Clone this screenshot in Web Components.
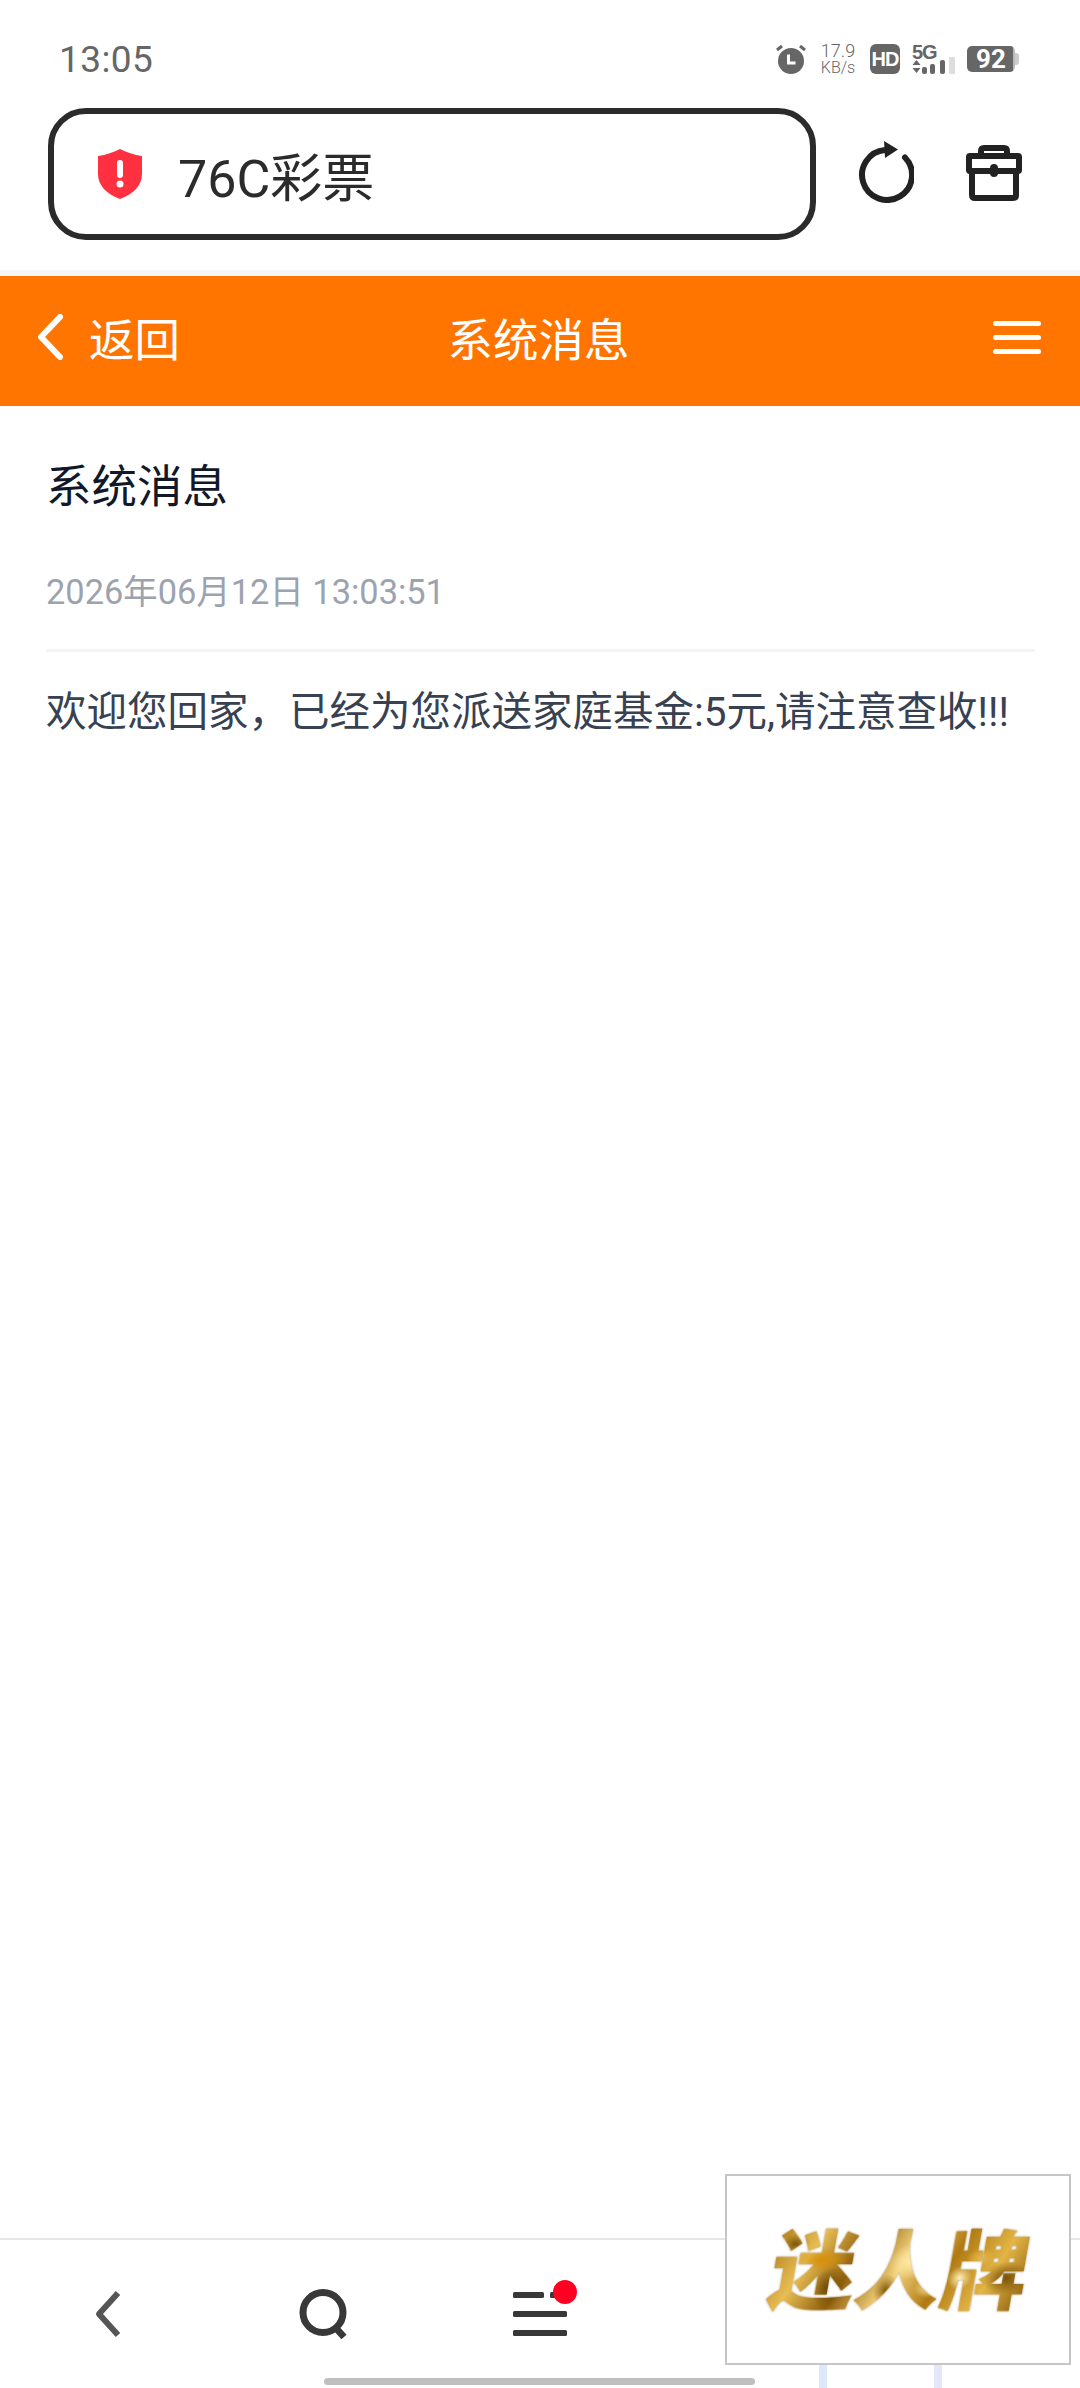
<!DOCTYPE html>
<html lang="zh-CN">
<head>
<meta charset="utf-8">
<title>系统消息</title>
<style>
html, body { margin: 0; padding: 0; background: #fff; }
body {
    width: 1080px;
    height: 2388px;
    overflow: hidden;
    position: relative;
    display: flex;
    flex-direction: column;
    font-family: Roboto, "Noto Sans CJK SC", sans-serif;
}
</style>
</head>
<body>
<status-bar>13:05</status-bar>
<browser-bar>76C彩票</browser-bar>
<app-header back="返回">系统消息</app-header>
<message-detail>
    <span slot="title">系统消息</span>
    <span slot="date">2026年06月12日 13:03:51</span>
    欢迎您回家，已经为您派送家庭基金:5元,请注意查收!!!
</message-detail>
<bottom-nav></bottom-nav>
<float-ad>迷人牌</float-ad>
<script>
class StatusBar extends HTMLElement {
    constructor() {
        super();
        this.attachShadow({mode: 'open'});
        this.shadowRoot.innerHTML = `
<style>
:host { display: flex; align-items: center; justify-content: space-between; height: 118px; flex: none; box-sizing: border-box; padding: 0 65px 0 59px; color: #666; }
.time { font-size: 37px; letter-spacing: 0.4px; }
.icons { display: flex; align-items: center; }
svg { display: block; }
.speed { width: 36px; margin: 0 14px 0 14px; text-align: center; line-height: 17px; font-size: 18px; font-weight: 300; white-space: nowrap; }
.speed span { display: block; font-size: 16px; }
.hd { width: 30px; height: 30px; border-radius: 6px; background: #666; color: #fff; font: 700 20px/30px "Liberation Sans", sans-serif; text-align: center; letter-spacing: -1px; }
.net { width: 44px; height: 30px; margin-left: 12px; position: relative; }
.net b { position: absolute; left: 0; top: -2px; font: 700 20px/20px "Liberation Sans", sans-serif; letter-spacing: -1px; }
.net svg { position: absolute; left: 0; top: 0; }
.bat { margin-left: 11px; width: 48px; height: 26px; border-radius: 5px; background: linear-gradient(90deg, #666 46px, #bbb 46px); color: #fff; font: 700 26px/27px Roboto, sans-serif; text-align: center; position: relative; }
.bat::after { content: ""; position: absolute; left: 48px; top: 7px; width: 4px; height: 12px; border-radius: 0 3px 3px 0; background: #ccc; }
</style>
<div class="time"><slot></slot></div>
<div class="icons">
    <svg width="30" height="30" viewBox="0 0 30 30">
        <circle cx="15" cy="17" r="13" fill="#666"/>
        <path d="M12.500 10.500v8.500h7" fill="none" stroke="#fff" stroke-width="3"/>
        <path d="M1 6l5-4M29 6l-5-4" stroke="#666" stroke-width="3" fill="none"/>
    </svg>
    <div class="speed">17.9<span>KB/s</span></div>
    <div class="hd">HD</div>
    <div class="net">
        <b>5G</b>
        <svg width="44" height="30" viewBox="0 0 44 30">
            <path d="M4.500 16l4 5h-8zM4.500 29l-4-5h8z" fill="#666"/>
            <rect x="10" y="23" width="5" height="7" rx="2" fill="#666"/>
            <rect x="18" y="20" width="5" height="10" rx="2" fill="#666"/>
            <rect x="28" y="16" width="5" height="14" rx="2" fill="#666"/>
            <rect x="37" y="13" width="6" height="17" rx="1" fill="#ddd"/>
        </svg>
    </div>
    <div class="bat">92</div>
</div>`;
    }
}

class BrowserBar extends HTMLElement {
    constructor() {
        super();
        this.attachShadow({mode: 'open'});
        this.shadowRoot.innerHTML = `
<style>
:host { display: flex; align-items: flex-start; height: 158px; flex: none; box-sizing: border-box; padding: 0 0 0 48px; border-bottom: 6px solid #f6f6f6; }
.url { box-sizing: border-box; width: 768px; height: 132px; margin-top: -10px; border: 6px solid #2b2b2b; border-radius: 38px; display: flex; align-items: center; padding-left: 43px; color: #2b2b2b; font-size: 52px; }
.url span { margin-left: 35px; }
svg { display: block; flex: none; }
.reload { margin: 23px 0 0 42px; }
.tool { margin: 27px 0 0 52px; }
</style>
<div class="url">
    <svg width="46" height="50" viewBox="0 0 46 50">
        <path d="M23 0c6 3 14 6 22 7v18c0 12-9 20-22 25C10 45 1 37 1 25V7c8-1 16-4 22-7z" fill="#ff3040"/>
        <rect x="20" y="11" width="6" height="18" rx="3" fill="#fff"/>
        <circle cx="23" cy="35" r="3.500" fill="#fff"/>
    </svg>
    <span><slot></slot></span>
</div>
<svg class="reload" width="56" height="62" viewBox="0 0 56 62" fill="none">
    <path d="M47 16.500A25 25 0 1 1 27 9" stroke="#222" stroke-width="6" stroke-linecap="round"/>
    <path d="M26 0l14 8.500-13 8.500z" fill="#222"/>
</svg>
<svg class="tool" width="56" height="56" viewBox="0 0 56 56" fill="none" stroke="#222" stroke-width="6" stroke-linejoin="round">
    <path d="M15 11V6c0-2 1-3 3-3h20c2 0 3 1 3 3v5"/>
    <rect x="3" y="11" width="50" height="15" rx="1"/>
    <path d="M6 26v24c0 2 1 3 3 3h38c2 0 3-1 3-3V26"/>
    <rect x="25" y="20" width="6" height="11" rx="3" fill="#222" stroke-width="2"/>
</svg>`;
    }
}

class AppHeader extends HTMLElement {
    constructor() {
        super();
        this.attachShadow({mode: 'open'});
        this.shadowRoot.innerHTML = `
<style>
:host { display: grid; grid-template-columns: 1fr auto 1fr; align-items: center; height: 130px; flex: none; background: #ff7500; color: #fff; font-size: 45.500px; box-sizing: border-box; padding: 0 39px 8px 36px; }
.back { display: flex; align-items: center; gap: 25px; }
.back svg { display: block; }
.menu { justify-self: end; display: flex; flex-direction: column; gap: 9px; width: 48px; }
.menu i { display: block; height: 5px; border-radius: 3px; background: #fff; }
</style>
<div class="back">
    <svg width="28" height="46" viewBox="0 0 28 46" fill="none">
        <path d="M24 3L5 23l19 20" stroke="#fff" stroke-width="6" stroke-linecap="round" stroke-linejoin="round"/>
    </svg>
    <span class="label"></span>
</div>
<div class="title"><slot></slot></div>
<div class="menu"><i></i><i></i><i></i></div>`;
        this.shadowRoot.querySelector('.label').textContent = this.getAttribute('back');
    }
}

class MessageDetail extends HTMLElement {
    constructor() {
        super();
        this.attachShadow({mode: 'open'});
        this.shadowRoot.innerHTML = `
<style>
:host { display: block; flex: 1; box-sizing: border-box; padding: 50px 45px 0 46px; background: #fff; }
.title { font-size: 45.500px; line-height: 63px; color: #111827; }
.date { margin-top: 52px; font-size: 34.400px; line-height: 42px; color: #9ca3af; padding-bottom: 36px; border-bottom: 3px solid #f3f4f6; }
.body { margin-top: 29px; font-size: 40.500px; line-height: 62px; color: #374151; white-space: nowrap; }
</style>
<div class="title"><slot name="title"></slot></div>
<div class="date"><slot name="date"></slot></div>
<div class="body"><slot></slot></div>`;
    }
}

class BottomNav extends HTMLElement {
    constructor() {
        super();
        this.attachShadow({mode: 'open'});
        this.shadowRoot.innerHTML = `
<style>
:host { display: grid; grid-template-columns: repeat(5, 216px); height: 150px; flex: none; box-sizing: border-box; border-top: 2px solid #e6e6e6; background: #fff; position: relative; }
.item { display: flex; align-items: center; justify-content: center; }
.item svg { display: block; overflow: visible; }
.menu { position: relative; }
.dot { position: absolute; left: 121px; top: 40px; width: 24px; height: 24px; border-radius: 50%; background: #ff0022; }
.home { position: absolute; left: 324px; bottom: 3px; width: 431px; height: 7px; border-radius: 4px; background: #bfbfbf; }
</style>
<div class="item">
    <svg width="28" height="48" viewBox="0 0 28 48" fill="none">
        <path d="M24 3L5 24l19 21" stroke="#555" stroke-width="6" stroke-linejoin="round"/>
    </svg>
</div>
<div class="item">
    <svg width="50" height="50" viewBox="0 0 50 50" fill="none" stroke="#383838" stroke-width="7">
        <circle cx="24" cy="23.500" r="20"/>
        <path d="M35 37l10 11"/>
    </svg>
</div>
<div class="item menu">
    <svg width="54" height="44" viewBox="0 0 54 44" fill="#383838">
        <rect x="0" y="0" width="31" height="6" rx="1.500"/>
        <rect x="37" y="0" width="6" height="6" rx="1.500"/>
        <rect x="0" y="19" width="54" height="6" rx="1.500"/>
        <rect x="0" y="38" width="54" height="6" rx="1.500"/>
    </svg>
    <span class="dot"></span>
</div>
<div class="item"></div>
<div class="item"></div>
<div class="home"></div>`;
    }
}

class FloatAd extends HTMLElement {
    constructor() {
        super();
        this.attachShadow({mode: 'open'});
        this.shadowRoot.innerHTML = `
<style>
:host { position: absolute; left: 725px; top: 2174px; width: 346px; height: 191px; box-sizing: border-box; border: 2px solid #c6c6c6; background: #fff; display: flex; align-items: center; justify-content: center; }
:host::before, :host::after { content: ""; position: absolute; top: 189px; width: 8px; height: 23px; }
:host::before { left: 92px; background: #dde8fa; }
:host::after { left: 207px; background: #e6e6fa; }
.logo {
    font: 900 86px/96px "Noto Sans CJK SC", sans-serif;
    white-space: nowrap;
    transform: skewX(-10deg) translate(2px, -4px);
    color: transparent;
    background:
        radial-gradient(ellipse 26px 12px at 50px 42px, #d98f08, transparent),
        radial-gradient(ellipse 14px 10px at 20px 26px, #7d560c, transparent),
        radial-gradient(ellipse 16px 20px at 60px 70px, #6f4a08, transparent),
        radial-gradient(ellipse 22px 18px at 138px 44px, #ffe9a8, transparent),
        radial-gradient(ellipse 12px 16px at 118px 72px, #83590c, transparent),
        radial-gradient(ellipse 14px 10px at 160px 70px, #f9dd92, transparent),
        radial-gradient(ellipse 24px 16px at 236px 60px, #7a5208, transparent),
        radial-gradient(ellipse 12px 12px at 190px 60px, #fff0b8, transparent),
        radial-gradient(ellipse 14px 10px at 208px 40px, #e8b84a, transparent),
        linear-gradient(115deg, #a9740f 0%, #e8bd55 18%, #8f5f0a 34%, #f3d27c 50%, #b07a12 66%, #e3b545 82%, #86590a 100%);
    -webkit-background-clip: text;
    background-clip: text;
    filter: drop-shadow(0 0 1px rgba(120, 90, 30, 0.6));
}
</style>
<div class="logo"><slot></slot></div>`;
    }
}

customElements.define('status-bar', StatusBar);
customElements.define('browser-bar', BrowserBar);
customElements.define('app-header', AppHeader);
customElements.define('message-detail', MessageDetail);
customElements.define('bottom-nav', BottomNav);
customElements.define('float-ad', FloatAd);
</script>
</body>
</html>
